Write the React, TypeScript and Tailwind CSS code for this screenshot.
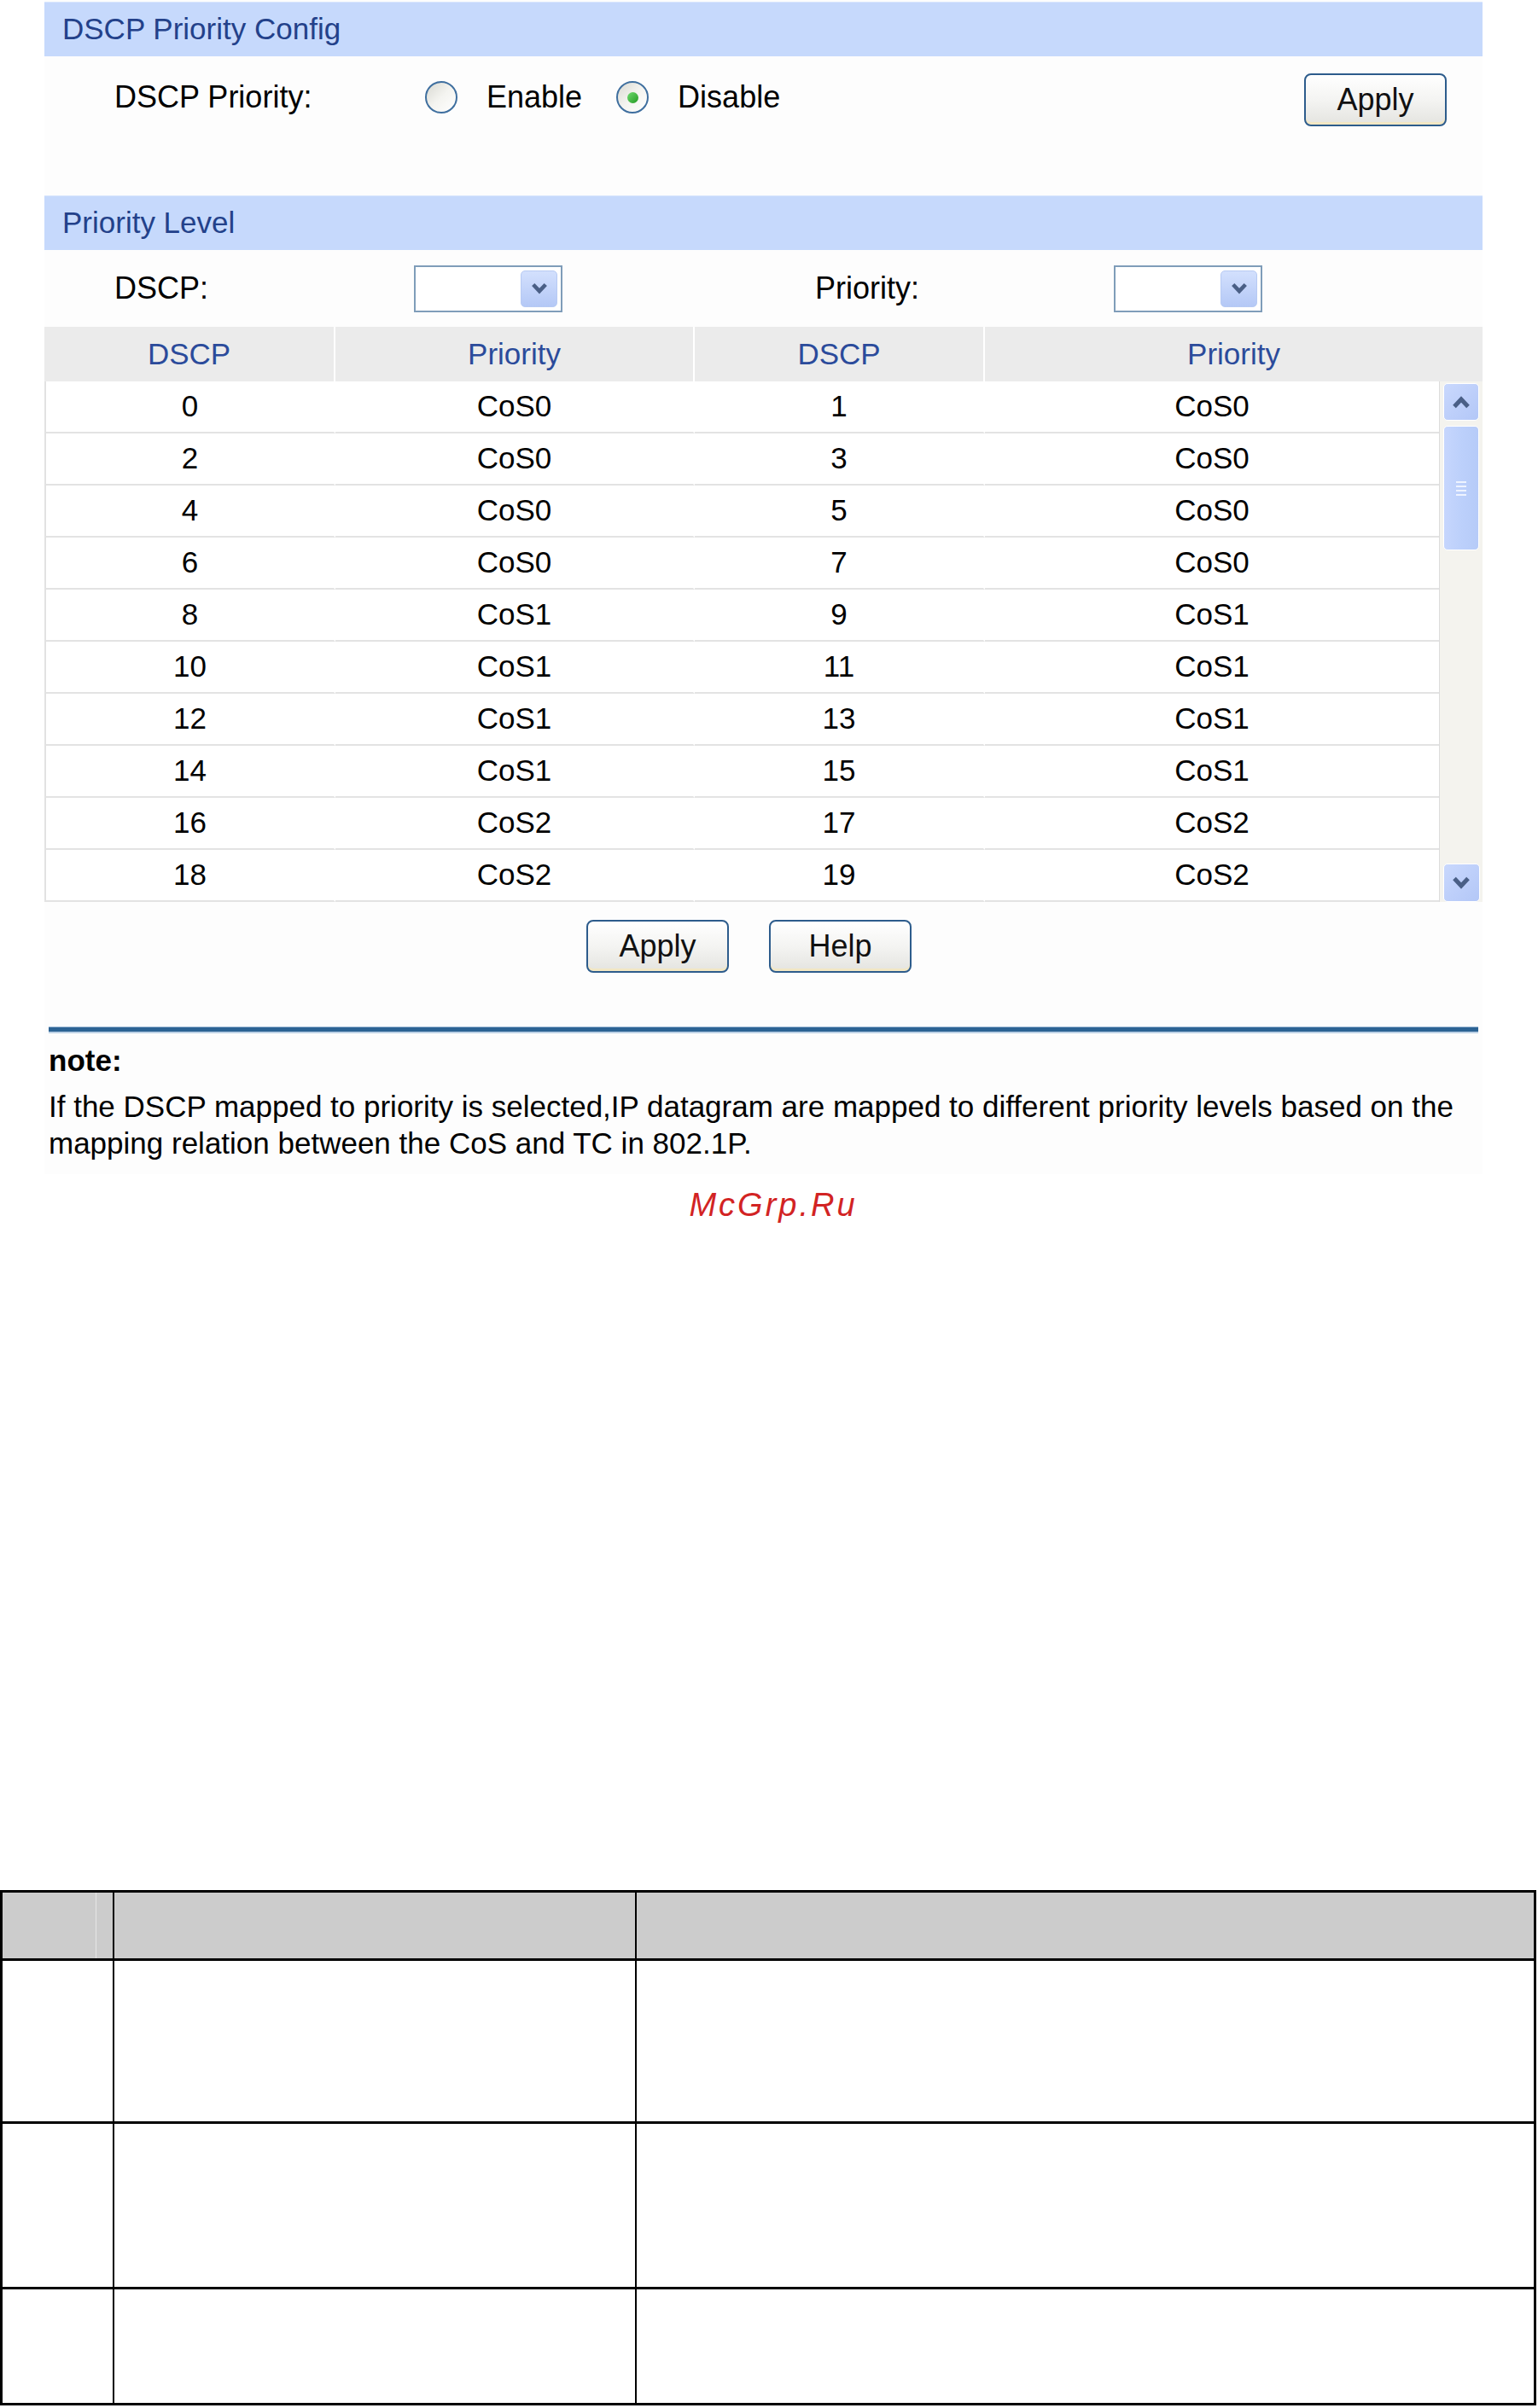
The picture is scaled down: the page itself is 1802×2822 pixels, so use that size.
import React from "react";

const font = "font-['Liberation_Sans',Arial,sans-serif]";

const rows = Array.from({ length: 10 }, (_, i) => ({
  a: 2 * i,
  pa: `CoS${Math.floor((2 * i) / 8)}`,
  b: 2 * i + 1,
  pb: `CoS${Math.floor((2 * i + 1) / 8)}`,
}));

function SectionHeader({ title }: { title: string }) {
  return (
    <div className="h-[64px] bg-[#c6d9fc] border-t border-[#d9e6fd] flex items-center pl-[21px] text-[35px] text-[#23418a]">
      {title}
    </div>
  );
}

function Radio({ checked }: { checked?: boolean }) {
  return (
    <div className="w-[38px] h-[38px] rounded-full border-2 border-[#3f6f9f] bg-linear-to-br from-[#d9d9d2] via-[#f4f4f0] to-white flex items-center justify-center shrink-0">
      {checked && <div className="w-[13px] h-[13px] rounded-full bg-linear-to-br from-[#6fdc6f] to-[#1e9a1e]" />}
    </div>
  );
}

function Button({ label }: { label: string }) {
  return (
    <div className="w-[167px] h-[62px] rounded-[8px] border-2 border-[#2d5c8c] bg-linear-to-b from-white via-[#f4f4f2] to-[#e4e4e0] flex items-center justify-center text-[36px] text-[#111] shadow-[inset_0_-3px_0_#f2e7c4]">
      {label}
    </div>
  );
}

function Chevron({ up, w = 22, h = 15 }: { up?: boolean; w?: number; h?: number }) {
  return (
    <svg width={w} height={h} viewBox="0 0 22 15">
      <path
        d={up ? "M3 12.5 L11 4 L19 12.5" : "M3 2.5 L11 11 L19 2.5"}
        fill="none"
        stroke="#4a5f86"
        strokeWidth="5"
        strokeLinejoin="miter"
      />
    </svg>
  );
}

function Select() {
  return (
    <div className="w-[174px] h-[55px] border-2 border-[#7f9db9] bg-white flex items-center justify-end pr-[4px]">
      <div className="w-[43px] h-[43px] rounded-[5px] border border-[#b7caf3] bg-linear-to-b from-[#d3e0fd] to-[#b4c8f6] flex items-center justify-center">
        <Chevron w={20} h={14} />
      </div>
    </div>
  );
}

function ScrollBar() {
  return (
    <div className="w-[50px] bg-[#f4f3ee] flex flex-col items-center pt-[2px]">
      <div className="w-[42px] h-[44px] rounded-[5px] border border-white bg-linear-to-br from-[#c9d8fd] to-[#b3c7f7] flex items-center justify-center">
        <Chevron up />
      </div>
      <div className="mt-[6px] w-[42px] h-[146px] rounded-[5px] border border-white bg-linear-to-r from-[#c6d6fd] via-[#bcd0fb] to-[#b6cbf8] flex flex-col items-center justify-center gap-[3px]">
        <div className="w-[12px] h-[2px] bg-[#eef3ff]" />
        <div className="w-[12px] h-[2px] bg-[#eef3ff]" />
        <div className="w-[12px] h-[2px] bg-[#eef3ff]" />
        <div className="w-[12px] h-[2px] bg-[#eef3ff]" />
      </div>
      <div className="flex-1" />
      <div className="w-[43px] h-[45px] rounded-[5px] border border-white bg-linear-to-br from-[#c9d8fd] to-[#b3c7f7] flex items-center justify-center">
        <Chevron />
      </div>
    </div>
  );
}

export default function App() {
  return (
    <div className={`${font} w-[1802px] min-h-[2822px] bg-white text-black`}>
      <div className="ml-[52px] w-[1685px] pt-[2px] bg-[#fdfdfd] pb-[15px]">
        <SectionHeader title="DSCP Priority Config" />

        <div className="h-[163px]">
          <div className="h-[96px] flex items-center pl-[82px] text-[36px]">
            <div className="w-[364px]">DSCP Priority:</div>
            <Radio />
            <span className="ml-[34px] mr-[40px]">Enable</span>
            <Radio checked />
            <span className="ml-[34px]">Disable</span>
            <div className="ml-auto mr-[42px] mt-[5px]">
              <Button label="Apply" />
            </div>
          </div>
        </div>

        <SectionHeader title="Priority Level" />

        <div className="h-[90px] flex items-center pl-[82px] text-[36px]">
          <div className="w-[351px]">DSCP:</div>
          <Select />
          <div className="ml-[296px] w-[350px]">Priority:</div>
          <Select />
        </div>

        {/* table header */}
        <div className="grid grid-cols-[341px_421px_340px_1fr] h-[64px] bg-[#ebebeb] text-[35px] text-[#2b4b9b]">
          {["DSCP", "Priority", "DSCP", "Priority"].map((h, i) => (
            <div
              key={i}
              className={`flex items-center justify-center ${i < 3 ? "border-r-2 border-white" : ""}`}
            >
              {h}
            </div>
          ))}
        </div>

        {/* table body */}
        <div className="flex h-[610px]">
          <div className="flex-1 border-l-2 border-[#e2e2e2] border-r border-r-[#dcdcdc] bg-white">
            {rows.map((r) => (
              <div key={r.a} className="grid grid-cols-[339px_421px_340px_1fr] h-[61px] text-[35px]">
                {[r.a, r.pa, r.b, r.pb].map((v, j) => (
                  <div
                    key={j}
                    className={`flex items-center justify-center border-b-2 border-b-[#e3e3e3] ${j < 3 ? "border-r-2 border-r-white" : ""}`}
                  >
                    {v}
                  </div>
                ))}
              </div>
            ))}
          </div>
          <ScrollBar />
        </div>

        <div className="mt-[21px] flex justify-center gap-[47px] pr-[34px]">
          <Button label="Apply" />
          <Button label="Help" />
        </div>

        {/* divider */}
        <div className="mt-[63px] mx-[5px]">
          <div className="h-[1px] bg-[#9dbad6]" />
          <div className="h-[5px] bg-[#2c6394]" />
          <div className="h-[2px] bg-[#bcd1e5]" />
        </div>

        <div className="mt-[10px] px-[5px] text-[35px] leading-[43px]">
          <div className="font-bold">note:</div>
          <p className="mt-[11px]">
            If the DSCP mapped to priority is selected,IP datagram are mapped to different priority levels based on the
            mapping relation between the CoS and TC in 802.1P.
          </p>
        </div>
      </div>

      <div className="mt-[14px] h-[44px] flex justify-center">
        <span className="italic text-[38px] leading-[44px] tracking-[3px] text-[#d22323] ml-[10px]">McGrp.Ru</span>
      </div>

      {/* bottom table */}
      <div className="mt-[781px] w-[1800px] border-[3px] border-black">
        <div className="grid grid-cols-[131px_612px_1fr] h-[80px] bg-[#cccccc] border-b-[3px] border-black">
          <div className="border-r-2 border-black flex">
            <div className="w-[110px] border-r border-[#e6e6e6]" />
          </div>
          <div className="border-r-2 border-black" />
          <div />
        </div>
        <div className="grid grid-cols-[131px_612px_1fr] h-[191px] border-b-[3px] border-black">
          <div className="border-r-2 border-black" />
          <div className="border-r-2 border-black" />
          <div />
        </div>
        <div className="grid grid-cols-[131px_612px_1fr] h-[194px] border-b-[3px] border-black">
          <div className="border-r-2 border-black" />
          <div className="border-r-2 border-black" />
          <div />
        </div>
        <div className="grid grid-cols-[131px_612px_1fr] h-[133px]">
          <div className="border-r-2 border-black" />
          <div className="border-r-2 border-black" />
          <div />
        </div>
      </div>
    </div>
  );
}
